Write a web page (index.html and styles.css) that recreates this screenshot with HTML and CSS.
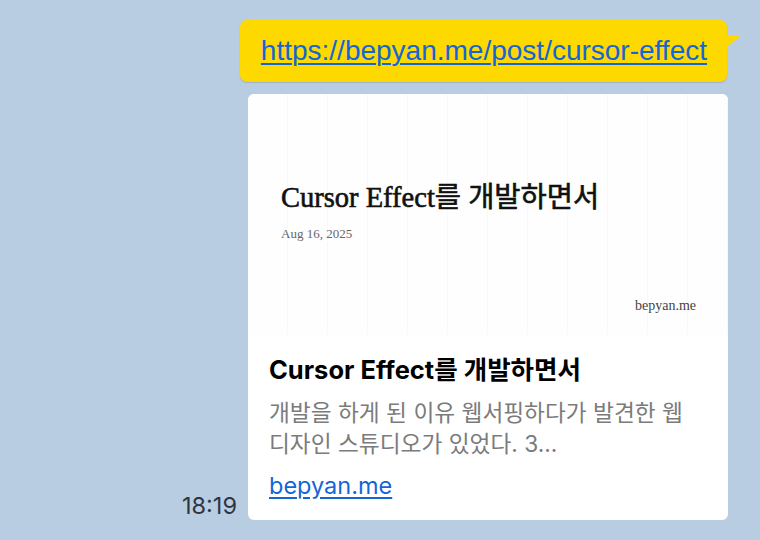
FILE: index.html
```html
<!DOCTYPE html>
<html lang="ko">
<head>
<meta charset="utf-8">
<link rel="stylesheet" href="styles.css">
</head>
<body>
<div class="chat">
  <div class="row row-bubble">
    <div class="bubble">
      <a class="bubble-link" href="#">https://bepyan.me/post/cursor-effect</a>
      <span class="tail"></span>
    </div>
  </div>
  <div class="row row-card">
    <span class="time">18:19</span>
    <div class="card">
      <div class="thumb">
        <div class="thumb-title">Cursor Effect를 개발하면서</div>
        <div class="thumb-date">Aug 16, 2025</div>
        <div class="thumb-site">bepyan.me</div>
      </div>
      <div class="card-body">
        <div class="card-title">Cursor Effect를 개발하면서</div>
        <div class="card-desc">개발을 하게 된 이유 웹서핑하다가 발견한 웹 디자인 스튜디오가 있었다. 3...</div>
        <a class="card-link" href="#">bepyan.me</a>
      </div>
    </div>
  </div>
</div>
</body>
</html>
```
FILE: styles.css
```css
html, body {
  margin: 0;
  padding: 0;
}
body {
  width: 760px;
  height: 540px;
  background: #b8cce2;
  font-family: "Liberation Sans", "Noto Sans CJK KR", sans-serif;
  overflow: hidden;
}
.chat {
  display: flex;
  flex-direction: column;
  padding-top: 20px;
}
.row {
  display: flex;
  justify-content: flex-end;
}
.row-bubble {
  padding-right: 33px;
}
.bubble {
  position: relative;
  background: #fed900;
  border-radius: 7px;
  padding: 15px 20px 0 21px;
  height: 47px;
  box-shadow: 0 1px 1px rgba(80, 100, 130, 0.25);
}
.bubble-link {
  color: #1565d8;
  font-size: 28px;
  line-height: 32px;
  text-decoration: underline;
  text-underline-offset: 3px;
  text-decoration-thickness: 1.5px;
  white-space: nowrap;
}
.tail {
  position: absolute;
  right: -13px;
  top: 16px;
  width: 0;
  height: 0;
  border-left: 14px solid #fed900;
  border-bottom: 12px solid transparent;
}
.row-card {
  margin-top: 12px;
  padding-right: 32px;
  align-items: flex-end;
  gap: 11px;
}
.time {
  font-family: "Inter", "Liberation Sans", sans-serif;
  font-size: 23.5px;
  color: #2f3540;
  line-height: 28px;
}
.card {
  width: 480px;
  background: #ffffff;
  border-radius: 6px;
  overflow: hidden;
}
.thumb {
  height: 241px;
  box-sizing: border-box;
  padding: 88px 32px 0 33px;
  display: flex;
  flex-direction: column;
  background-color: #fefeff;
  background-image: repeating-linear-gradient(90deg, transparent 0, transparent 39px, rgba(238, 240, 247, 0.4) 39px, rgba(238, 240, 247, 0.4) 40px);
}
.thumb-title {
  font-family: "Liberation Serif", "Noto Sans CJK KR", serif;
  font-size: 28.5px;
  line-height: 32px;
  color: #111111;
  font-weight: 400;
  -webkit-text-stroke: 0.6px #111111;
  white-space: nowrap;
}
.thumb-date {
  font-family: "Liberation Serif", serif;
  font-size: 13px;
  color: #666666;
  margin-top: 12px;
}
.thumb-site {
  font-family: "Liberation Serif", serif;
  font-size: 14px;
  color: #444444;
  align-self: flex-end;
  margin-top: 56px;
}
.card-body {
  padding: 20px 21px 19px 21px;
  display: flex;
  flex-direction: column;
  font-family: "Inter", "Noto Sans CJK KR", sans-serif;
}
.card-title {
  font-size: 25.5px;
  font-weight: 700;
  color: #000000;
  line-height: 30px;
  white-space: nowrap;
}
.card-desc {
  font-size: 22.7px;
  color: #7b7b7b;
  line-height: 31px;
  margin-top: 12px;
}
.card-link {
  font-size: 23.5px;
  color: #1565d8;
  line-height: 30px;
  margin-top: 12px;
  text-decoration: underline;
  text-underline-offset: 3px;
  align-self: flex-start;
}
```
